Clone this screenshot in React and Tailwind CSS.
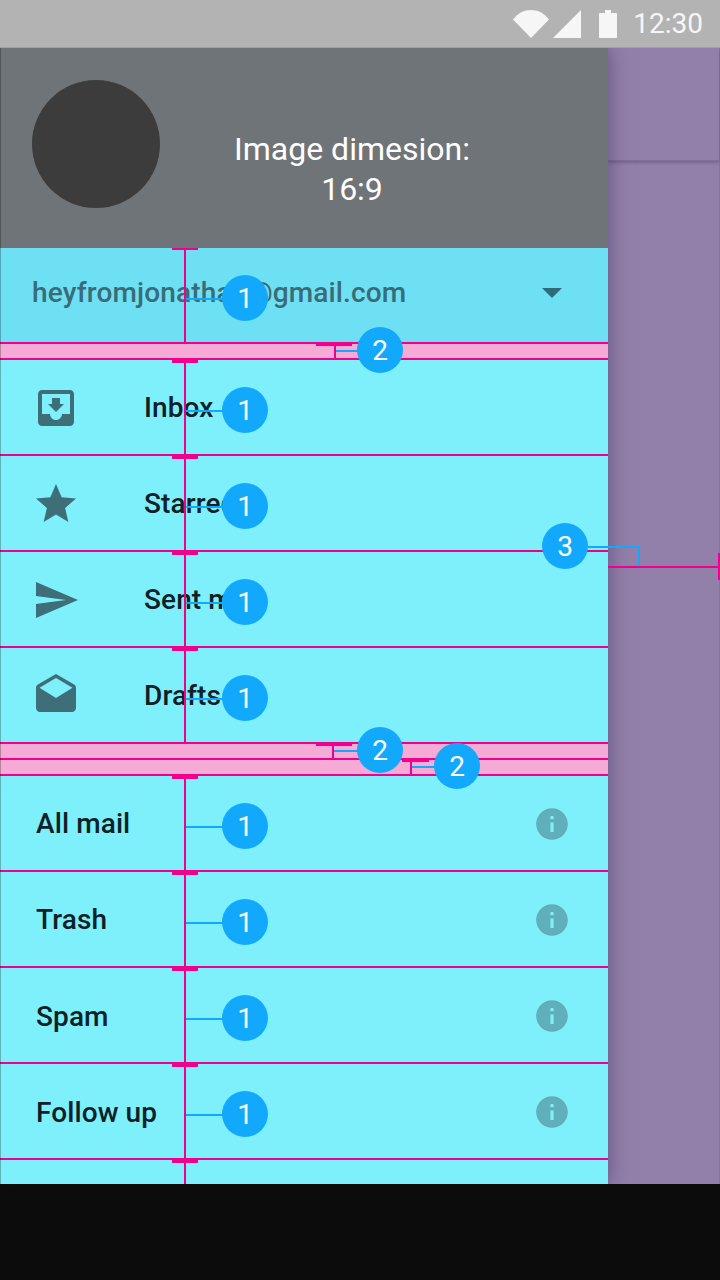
import React from 'react';

const Badge = ({ n, className }) => (
    <div className={`absolute z-20 w-[46px] h-[46px] pt-px rounded-full bg-[#12a9fc] text-white flex items-center justify-center text-[28px] leading-none ${className}`}>
        {n}
    </div>
);

// the pink height marker + numbered badge on each 96px row
const RowMarker = ({ first }) => (
    <>
        <div className="absolute left-[184px] top-0 bottom-[-2px] w-[2px] bg-[#f0008c] z-10" />
        {first
            ? <div className="absolute left-[172px] top-0 w-[26px] h-[2px] bg-[#f0008c] z-10" />
            : <div className="absolute left-[172px] top-0 w-[26px] h-[3px] bg-[#f0008c] z-10" />}
        <div className="absolute left-[186px] top-[50px] w-[40px] h-[2px] bg-[#12a9fc] z-10" />
        <Badge n="1" className="left-[222px] top-[27px]" />
    </>
);

const MoveToInbox = () => (
    <svg width="48" height="48" viewBox="0 0 24 24" fill="#3e6e78">
        <path d="M19 3H4.99c-1.11 0-1.98.89-1.98 2L3 19c0 1.1.88 2 1.99 2H19c1.1 0 2-.9 2-2V5c0-1.11-.9-2-2-2z" />
        <path fill="#7df0fc" d="M5 5h14v10h-4c0 1.66-1.35 3-3 3s-3-1.34-3-3H5z" />
        <path d="M16 10h-2V7h-4v3H8l4 4z" />
    </svg>
);

const Star = () => (
    <svg width="48" height="48" viewBox="0 0 24 24" fill="#3e6e78">
        <path d="M12 17.27L18.18 21l-1.64-7.03L22 9.24l-7.19-.61L12 2 9.19 8.63 2 9.24l5.46 4.73L5.82 21z" />
    </svg>
);

const Send = () => (
    <svg width="48" height="48" viewBox="0 0 24 24" fill="#3e6e78">
        <path d="M2.01 21L23 12 2.01 3 2 10l15 2-15 2z" />
    </svg>
);

const Drafts = () => (
    <svg width="48" height="48" viewBox="0 0 24 24" fill="#3e6e78">
        <path d="M21.99 8c0-.72-.37-1.35-.94-1.7L12 1 2.95 6.3C2.38 6.65 2 7.28 2 8v10c0 1.1.9 2 2 2h16c1.1 0 2-.9 2-2l-.01-10zM12 13L3.74 7.84 12 3l8.26 4.84L12 13z" />
    </svg>
);

const Info = () => (
    <svg width="38" height="38" viewBox="0 0 24 24" fill="#60afba">
        <path d="M12 2C6.48 2 2 6.48 2 12s4.48 10 10 10 10-4.48 10-10S17.52 2 12 2zm1 15h-2v-6h2v6zm0-8h-2V7h2v2z" />
    </svg>
);

const IconRow = ({ icon, label }) => (
    <div className="relative h-24 shrink-0 flex items-center pl-8 border-b-2 border-[#f0008c]">
        <div className="w-[112px] pt-[2px]">{icon}</div>
        <span className="pt-[2px] text-[28px] font-medium tracking-[0.1px] text-[#0e2126]">{label}</span>
        <RowMarker />
    </div>
);

const LabelRow = ({ label, low }) => (
    <div className="relative h-24 shrink-0 flex items-center justify-between pl-9 pr-[37px] border-b-2 border-[#f0008c]">
        <span className={`${low ? 'pt-[4px]' : 'pt-[2px]'} text-[28px] font-medium tracking-[0.1px] text-[#0e2126]`}>{label}</span>
        <div className="pt-[2px]"><Info /></div>
        <RowMarker />
    </div>
);

const Band = ({ children }) => (
    <div className="relative h-4 shrink-0 bg-[#f5abd6] border-b-2 border-[#f0008c]">{children}</div>
);

const BandMarker = ({ tick, stem, line, badge }) => (
    <>
        <div className={`absolute top-[-1px] h-[3px] bg-[#f0008c] z-10 ${tick}`} />
        <div className={`absolute top-0 h-[14px] w-[2px] bg-[#f0008c] z-10 ${stem}`} />
        <div className={`absolute top-[6px] w-[26px] h-[2px] bg-[#12a9fc] z-10 ${line}`} />
        <Badge n="2" className={`top-[-17px] ${badge}`} />
    </>
);

export default function App() {
    return (
        <div className="w-[720px] h-[1280px] flex flex-col overflow-hidden bg-[#0c0c0c] font-['Roboto',sans-serif]">
            {/* Status bar */}
            <div className="h-12 shrink-0 bg-[#b3b3b3] border-b border-[#a2a2a2] pt-px flex items-center justify-end pr-[17px] text-[#f6f6f6]">
                <svg width="36" height="28" viewBox="0 0 36 28" fill="#f6f6f6">
                    <path d="M0 9.5C5 3 11 0 18 0s13 3 18 9.5L18 28z" />
                </svg>
                <svg className="ml-1" width="28" height="28" viewBox="0 0 28 28" fill="#f6f6f6">
                    <path d="M28 0v28H0z" />
                </svg>
                <svg className="ml-[18px]" width="18" height="28" viewBox="0 0 18 28" fill="#f6f6f6">
                    <path d="M6 0h6v3h5a1 1 0 0 1 1 1v23a1 1 0 0 1-1 1H1a1 1 0 0 1-1-1V4a1 1 0 0 1 1-1h5z" />
                </svg>
                <span className="ml-4 text-[28px] leading-none">12:30</span>
            </div>

            {/* Main area */}
            <div className="relative h-[1136px] shrink-0 flex overflow-hidden bg-[#9280ab]">
                {/* Drawer */}
                <div className="relative z-10 w-[608px] shrink-0 flex flex-col bg-[#7df0fc] shadow-[0_0_20px_rgba(50,30,80,0.5)]">
                    <div className="h-[200px] shrink-0 bg-[#6f7478] flex items-start pl-8 pt-8">
                        <div className="w-32 h-32 rounded-full bg-[#3c3c3c] shrink-0" />
                        <div className="w-[384px] pt-[49px] text-center text-white text-[32px] leading-[40px]">
                            Image dimesion:
                            <br />
                            16:9
                        </div>
                    </div>

                    <div className="relative h-24 shrink-0 flex items-center justify-between pl-8 pr-[46px] pb-1 bg-[#6ee0f4] border-b-2 border-[#f0008c]">
                        <span className="text-[28px] font-medium tracking-[0.15px] text-[#3a6c78]">heyfromjonathan@gmail.com</span>
                        <div className="w-0 h-0 border-x-[10px] border-x-transparent border-t-[10px] border-t-[#2f6b7a]" />
                        <RowMarker first />
                    </div>

                    <Band>
                        <BandMarker tick="left-[316px] w-[36px]" stem="left-[334px]" line="left-[336px]" badge="left-[357px]" />
                    </Band>

                    <IconRow icon={<MoveToInbox />} label="Inbox" />
                    <IconRow icon={<Star />} label="Starred" />
                    <IconRow icon={<Send />} label="Sent mail" />
                    <IconRow icon={<Drafts />} label="Drafts" />

                    <Band>
                        <BandMarker tick="left-[316px] w-[36px]" stem="left-[332px]" line="left-[334px]" badge="left-[357px]" />
                    </Band>
                    <Band>
                        <BandMarker tick="left-[402px] w-[27px]" stem="left-[410px]" line="left-[412px]" badge="left-[434px]" />
                    </Band>

                    <LabelRow label="All mail" />
                    <LabelRow label="Trash" />
                    <LabelRow label="Spam" low />
                    <LabelRow label="Follow up" low />

                    {/* last row, cut off by the nav bar */}
                    <div className="relative flex-1">
                        <div className="absolute left-[184px] top-0 bottom-0 w-[2px] bg-[#f0008c] z-10" />
                        <div className="absolute left-[172px] top-0 w-[26px] h-[3px] bg-[#f0008c] z-10" />
                    </div>

                    {/* hairline on the drawer's left edge */}
                    <div className="absolute left-0 top-0 bottom-0 w-px bg-black/25 z-10" />
                </div>

                {/* App bar edge behind the scrim */}
                <div className="flex-1 border-r border-[#84739d]">
                    <div className="h-[113px] border-b border-[#7f6e98] shadow-[0_2px_3px_rgba(60,40,90,0.3)]" />
                </div>

                {/* Drawer width marker */}
                <Badge n="3" className="left-[542px] top-[475px]" />
                <div className="absolute z-20 left-[588px] top-[498px] w-[52px] h-[20px] border-t-2 border-r-2 border-[#12a9fc]" />
                <div className="absolute z-20 left-[608px] top-[518px] w-[112px] h-[2px] bg-[#f0008c]" />
                <div className="absolute z-20 left-[718px] top-[505px] w-[2px] h-[27px] bg-[#f0008c]" />
            </div>
        </div>
    );
}
